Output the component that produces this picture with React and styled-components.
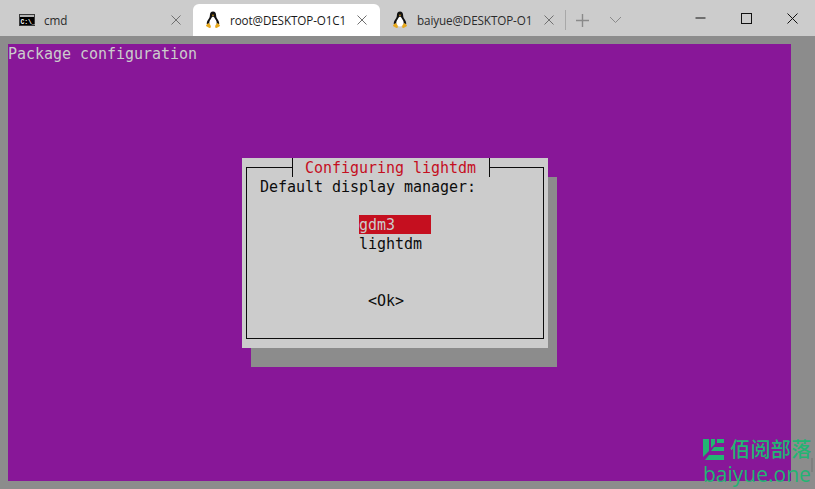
import React from "react";
import styled, { createGlobalStyle } from "styled-components";

const GlobalStyle = createGlobalStyle`
  html, body {
    margin: 0;
    height: 100%;
    overflow: hidden;
    background: #8c8c8c;
  }
  #root {
    height: 100%;
  }
`;

const Window = styled.div`
  position: relative;
  height: 489px;
  display: flex;
  flex-direction: column;
  overflow: hidden;
`;

const TitleBar = styled.div`
  height: 36px;
  flex: none;
  display: flex;
  align-items: flex-end;
  padding-left: 7px;
  background: #cccccc;
`;

const Tab = styled.div`
  height: 32px;
  box-sizing: border-box;
  display: flex;
  align-items: center;
  padding: 0 ${(p) => (p.$active ? "12px" : "11px")} 0 12px;
  background: ${(p) => (p.$active ? "#ffffff" : "transparent")};
  border-radius: 6px 6px 0 0;
  font-family: "Open Sans", "Noto Sans", sans-serif;
  font-size: 11.7px;
  letter-spacing: -0.12px;
  color: ${(p) => (p.$active ? "#1a1a1a" : "#2b2b2b")};
`;

const TabIcon = styled.svg`
  width: 16px;
  height: 18px;
  flex: none;
  margin-right: 9px;
`;

const TabLabel = styled.span`
  width: 115px;
  overflow: hidden;
  white-space: nowrap;
`;

const TabClose = styled.svg`
  width: 12px;
  height: 12px;
  flex: none;
  margin-left: 11px;
  stroke: #707070;
  stroke-width: 1;
  fill: none;
`;

const Divider = styled.div`
  width: 1px;
  height: 20px;
  margin: 0 0 6px -1px;
  background: #a8a8a8;
`;

const StripButton = styled.svg`
  width: ${(p) => p.$size}px;
  height: ${(p) => p.$size}px;
  flex: none;
  margin: 0 0 ${(p) => p.$bottom}px ${(p) => p.$left}px;
  stroke: #8a8a8a;
  stroke-width: ${(p) => p.$stroke};
  fill: none;
`;

const WindowControls = styled.div`
  margin-left: auto;
  align-self: flex-start;
  display: flex;
`;

const ControlButton = styled.div`
  width: 46px;
  height: 36px;
  display: flex;
  align-items: center;
  justify-content: center;
  svg {
    width: 11px;
    height: 11px;
    stroke: #111111;
    stroke-width: 1;
    fill: none;
  }
`;

const Terminal = styled.div`
  flex: 1;
  display: flex;
  padding: 8px 24px 8px 8px;
  background: #8c8c8c;
`;

const Screen = styled.div`
  flex: 1;
  background: #881798;
  font-family: "DejaVu Sans Mono", "Liberation Mono", monospace;
  font-size: 15px;
  line-height: 21px;
  letter-spacing: -0.03px;
  white-space: pre;
  color: #cccccc;
`;

const BackTitle = styled.div`
  height: 19px;
  margin-bottom: 95px;
`;

const Dialog = styled.div`
  position: relative;
  width: 306px;
  height: 190px;
  box-sizing: border-box;
  margin-left: 234px;
  padding: 9px 4px;
  background: #cccccc;
  box-shadow: 9px 19px 0 #8c8c8c;
  color: #0c0c0c;
`;

const Frame = styled.div`
  height: 100%;
  box-sizing: border-box;
  border: 1px solid #0c0c0c;
  padding-top: 9px;
`;

const DialogTitle = styled.div`
  position: absolute;
  left: 50px;
  top: 0;
  width: 198px;
  height: 19px;
  box-sizing: border-box;
  padding-left: 12px;
  border-left: 1px solid #0c0c0c;
  border-right: 1px solid #0c0c0c;
  background: #cccccc;
  color: #c50f1f;
`;

const Prompt = styled.div`
  height: 19px;
  margin-left: 13px;
`;

const Menu = styled.div`
  width: 72px;
  margin: 19px 0 38px 112px;
`;

const MenuItem = styled.div`
  height: 19px;
  background: ${(p) => (p.$selected ? "#c50f1f" : "transparent")};
  color: ${(p) => (p.$selected ? "#cccccc" : "#0c0c0c")};
`;

const OkButton = styled.div`
  height: 19px;
  margin-left: 121px;
`;

const Watermark = styled.div`
  position: absolute;
  left: 703px;
  top: 436px;
  width: 112px;
  color: #22b573;
`;

const WatermarkTop = styled.div`
  display: flex;
  align-items: center;
  height: 26px;
  font-family: "Noto Sans CJK SC", sans-serif;
  font-size: 20px;
  font-weight: 500;
  letter-spacing: 0.4px;
  line-height: 26px;
  white-space: nowrap;
`;

const WatermarkLogo = styled.svg`
  width: 21px;
  height: 22px;
  flex: none;
  margin-right: 6px;
`;

const WatermarkUrl = styled.div`
  font-family: "Open Sans", "Noto Sans", sans-serif;
  font-size: 21px;
  line-height: 24px;
  white-space: nowrap;
`;

const ScrollThumb = styled.div`
  position: absolute;
  right: 2px;
  top: 458px;
  width: 2px;
  height: 14px;
  background: #7f7f7f;
`;

const CmdIcon = () => (
  <TabIcon viewBox="0 0 16 18">
    <rect x="0" y="3" width="16" height="12" fill="#3a3a3a" />
    <rect x="1" y="4" width="14" height="2" fill="#b4b4b4" />
    <rect x="1" y="6" width="14" height="8" fill="#000000" />
    <text
      x="1.6"
      y="12.6"
      fontFamily="Liberation Mono, monospace"
      fontSize="6.4"
      fontWeight="700"
      fill="#ffffff"
    >
      C:\_
    </text>
  </TabIcon>
);

const TuxIcon = () => (
  <TabIcon viewBox="0 0 16 18">
    <path
      d="M8 0.6c-2.1 0-3.1 1.6-3.1 3.5 0 1.6-0.3 2.5-1.3 3.9-1.2 1.7-2.1 3.5-1.8 5.3h12.4c0.3-1.9-0.7-3.7-1.8-5.3-1-1.4-1.3-2.3-1.3-3.9 0-1.9-1-3.5-3.1-3.5z"
      fill="#111111"
    />
    <path
      d="M8 5.6c-1.2 0.4-1.4 1.2-2.3 2.6-1 1.4-1.8 3.2-1.3 5 0.4 1.4 1.8 2.2 3.6 2.2s3.2-0.8 3.6-2.2c0.5-1.8-0.3-3.6-1.3-5-0.9-1.4-1.1-2.2-2.3-2.6z"
      fill="#ffffff"
    />
    <path d="M6.7 3.8h2.6l-1.3 1.5z" fill="#e8a91c" />
    <path
      d="M3.4 12c-0.9 0.6-1.5 1.4-2.2 2.2-0.4 0.4-0.2 0.9 0.3 1.1 1 0.5 2 1.3 3.1 1.6 1 0.2 1.4-0.7 1.2-1.7-0.2-1.1-1-2.5-2.4-3.2z"
      fill="#e8a91c"
    />
    <path
      d="M12.6 12c0.9 0.6 1.5 1.4 2.2 2.2 0.4 0.4 0.2 0.9-0.3 1.1-1 0.5-2 1.3-3.1 1.6-1 0.2-1.4-0.7-1.2-1.7 0.2-1.1 1-2.5 2.4-3.2z"
      fill="#e8a91c"
    />
  </TabIcon>
);

const CloseGlyph = () => (
  <TabClose viewBox="0 0 12 12">
    <path d="M1.5 1.5l9 9M10.5 1.5l-9 9" />
  </TabClose>
);

export default function App() {
  return (
    <Window>
      <GlobalStyle />
      <TitleBar>
        <Tab>
          <CmdIcon />
          <TabLabel>cmd</TabLabel>
          <CloseGlyph />
        </Tab>
        <Tab $active>
          <TuxIcon />
          <TabLabel>root@DESKTOP-O1C1</TabLabel>
          <CloseGlyph />
        </Tab>
        <Tab>
          <TuxIcon />
          <TabLabel>baiyue@DESKTOP-O1</TabLabel>
          <CloseGlyph />
        </Tab>
        <Divider />
        <StripButton viewBox="0 0 13 13" $size={13} $left={10} $bottom={9} $stroke={1.4}>
          <path d="M6.5 0v13M0 6.5h13" />
        </StripButton>
        <StripButton viewBox="0 0 13 8" $size={13} $left={20} $bottom={10} $stroke={1}>
          <path d="M1 1.5l5.5 5.5 5.5-5.5" />
        </StripButton>
        <WindowControls>
          <ControlButton>
            <svg viewBox="0 0 11 11">
              <path d="M0.5 5h10" />
            </svg>
          </ControlButton>
          <ControlButton>
            <svg viewBox="0 0 11 11">
              <rect x="0.5" y="0.5" width="10" height="10" />
            </svg>
          </ControlButton>
          <ControlButton>
            <svg viewBox="0 0 11 11">
              <path d="M0.5 0.5l10 10M10.5 0.5l-10 10" />
            </svg>
          </ControlButton>
        </WindowControls>
      </TitleBar>
      <Terminal>
        <Screen>
          <BackTitle>Package configuration</BackTitle>
          <Dialog>
            <DialogTitle>Configuring lightdm</DialogTitle>
            <Frame>
              <Prompt>Default display manager:</Prompt>
              <Menu>
                <MenuItem $selected>gdm3</MenuItem>
                <MenuItem>lightdm</MenuItem>
              </Menu>
              <OkButton>&lt;Ok&gt;</OkButton>
            </Frame>
          </Dialog>
        </Screen>
      </Terminal>
      <ScrollThumb />
      <Watermark>
        <WatermarkTop>
          <WatermarkLogo viewBox="0 0 21 22">
            <path d="M0 1h6v12l-6 6z" fill="#22b573" />
            <path d="M8 1h4v5l-4 4z" fill="#22b573" />
            <path d="M14 1h7v4h-7zM11 9h10v4H8zM6 17h15v5H2z" fill="#22b573" />
          </WatermarkLogo>
          佰阅部落
        </WatermarkTop>
        <WatermarkUrl>baiyue.one</WatermarkUrl>
      </Watermark>
    </Window>
  );
}
